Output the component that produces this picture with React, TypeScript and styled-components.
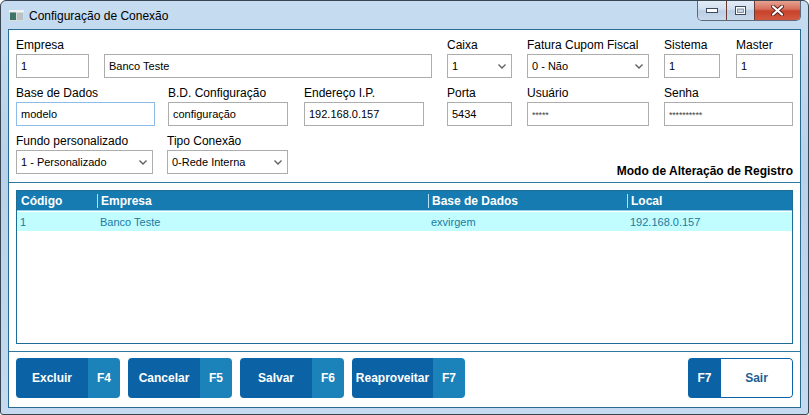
import React from "react";
import styled, { createGlobalStyle } from "styled-components";

const GlobalStyle = createGlobalStyle`
  html, body {
    margin: 0;
    padding: 0;
    background: #ffffff;
  }
  body {
    font-family: "Liberation Sans", Arial, sans-serif;
  }
`;

const Window = styled.div`
  width: 809px;
  height: 415px;
  box-sizing: border-box;
  border: 1px solid #3a4552;
  border-radius: 6px 6px 3px 3px;
  background: linear-gradient(180deg, #c6dcf1 0%, #b9d1ea 40%, #c5daef 100%);
  padding: 0 7px 6px;
  display: flex;
  flex-direction: column;
  overflow: hidden;
`;

const TitleBar = styled.div`
  height: 28px;
  display: flex;
  align-items: flex-start;
  flex-shrink: 0;
`;

const AppIcon = styled.svg`
  margin: 9px 0 0 1px;
  flex-shrink: 0;
`;

const Title = styled.div`
  margin: 7px 0 0 5px;
  font-size: 12px;
  line-height: 16px;
  color: #000;
`;

const Controls = styled.div`
  margin-left: auto;
  margin-top: -1px;
  display: flex;
  height: 20px;
  border: 1px solid #5d6b7c;
  border-top: none;
  border-radius: 0 0 5px 5px;
  overflow: hidden;
`;

const CaptionButton = styled.div<{ $w: number; $close?: boolean }>`
  width: ${(p) => p.$w}px;
  display: flex;
  align-items: center;
  justify-content: center;
  & + & {
    border-left: 1px solid ${(p) => (p.$close ? "#6b3a33" : "#7b8ba0")};
  }
  background: ${(p) =>
    p.$close
      ? "linear-gradient(180deg, #e9a899 0%, #d7705c 45%, #c7422b 55%, #d2583f 100%)"
      : "linear-gradient(180deg, #e4edf7 0%, #d3e0ef 45%, #bccee4 55%, #c9d9ec 100%)"};
`;

const Client = styled.div`
  flex: 1;
  border: 1px solid #2a6b92;
  background: #ffffff;
  display: flex;
  flex-direction: column;
  min-height: 0;
`;

const FormSection = styled.div`
  height: 153px;
  box-sizing: border-box;
  padding: 7px 7px 0;
  border-bottom: 1px solid #2f78a2;
  display: flex;
  flex-direction: column;
  gap: 7px;
`;

const Row = styled.div`
  display: flex;
  align-items: flex-start;
`;

const Field = styled.div<{ $w: number; $ml?: number }>`
  width: ${(p) => p.$w}px;
  margin-left: ${(p) => p.$ml ?? 0}px;
  display: flex;
  flex-direction: column;
  flex-shrink: 0;
`;

const Label = styled.div`
  font-size: 12px;
  line-height: 17px;
  color: #000;
  white-space: nowrap;
`;

const Box = styled.div<{ $focused?: boolean }>`
  height: 24px;
  box-sizing: border-box;
  border: 1px solid ${(p) => (p.$focused ? "#8fbce6" : "#adadad")};
  background: #ffffff;
  padding: 0 5px 0 4px;
  display: flex;
  align-items: center;
  font-size: 11px;
  color: #000;
  white-space: nowrap;
`;

const Mask = styled.span`
  font-size: 9px;
  letter-spacing: -0.2px;
  color: #444;
  margin-top: 1px;
`;

const SelectText = styled.span`
  flex: 1;
`;

const Note = styled.div`
  margin-left: auto;
  align-self: flex-end;
  margin-bottom: -4px;
  font-size: 12px;
  line-height: 13px;
  font-weight: bold;
  color: #000;
`;

const GridSection = styled.div`
  height: 169px;
  box-sizing: border-box;
  padding: 7px;
  border-bottom: 1px solid #2f78a2;
`;

const GridBox = styled.div`
  height: 154px;
  box-sizing: border-box;
  border: 1px solid #1c6c95;
  background: #ffffff;
`;

const GridRow = styled.div<{ $head?: boolean }>`
  display: grid;
  grid-template-columns: 80px 331px 199px 1fr;
  height: 19px;
  background: ${(p) => (p.$head ? "#167bb0" : "#c1fcfe")};
  color: ${(p) => (p.$head ? "#ffffff" : "#1b7aa2")};
  font-size: ${(p) => (p.$head ? 12 : 11)}px;
  font-weight: ${(p) => (p.$head ? "bold" : "normal")};
  border-bottom: ${(p) => (p.$head ? "1px solid #8fcde4" : "none")};
  margin-bottom: ${(p) => (p.$head ? 1 : 0)}px;
`;

const Cell = styled.div<{ $sep?: boolean; $head?: boolean }>`
  position: relative;
  display: flex;
  align-items: center;
  padding-left: ${(p) => (p.$head ? 4 : 3)}px;
  white-space: nowrap;
  ${(p) =>
    p.$sep && p.$head
      ? `&::before {
    content: "";
    position: absolute;
    left: 0;
    top: 3px;
    bottom: 2px;
    width: 1px;
    background: #b9dff1;
  }`
      : ""}
`;

const ButtonBar = styled.div`
  flex: 1;
  padding: 6px 7px 0;
  display: flex;
  align-items: flex-start;
  gap: 8px;
`;

const ActionButton = styled.div`
  height: 40px;
  display: flex;
  border-radius: 4px;
  overflow: hidden;
  color: #ffffff;
  font-size: 12px;
  font-weight: bold;
`;

const ButtonLabel = styled.div<{ $w: number; $light?: boolean }>`
  width: ${(p) => p.$w}px;
  box-sizing: border-box;
  display: flex;
  align-items: center;
  justify-content: center;
  background: ${(p) => (p.$light ? "#ffffff" : "#0b63a6")};
  color: ${(p) => (p.$light ? "#1a5e93" : "#ffffff")};
  border: ${(p) => (p.$light ? "1px solid #0b63a6" : "none")};
  border-left: none;
  border-radius: ${(p) => (p.$light ? "0 4px 4px 0" : "0")};
`;

const KeyPart = styled.div<{ $w: number; $dark?: boolean }>`
  width: ${(p) => p.$w}px;
  display: flex;
  align-items: center;
  justify-content: center;
  background: ${(p) => (p.$dark ? "#0b63a6" : "#1b82ba")};
  color: #ffffff;
`;

const ExitButton = styled(ActionButton)`
  margin-left: auto;
`;

const Chevron = () => (
  <svg width="8" height="5" viewBox="0 0 8 5">
    <polyline points="0.5,0.5 4,4 7.5,0.5" fill="none" stroke="#606060" strokeWidth="1.4" />
  </svg>
);

interface SelectProps {
  value: string;
}

const Select: React.FC<SelectProps> = ({ value }) => (
  <Box>
    <SelectText>{value}</SelectText>
    <Chevron />
  </Box>
);

interface ActionProps {
  label: string;
  fkey: string;
  w: number;
}

const Action: React.FC<ActionProps> = ({ label, fkey, w }) => (
  <ActionButton>
    <ButtonLabel $w={w}>{label}</ButtonLabel>
    <KeyPart $w={32}>{fkey}</KeyPart>
  </ActionButton>
);

const columns = ["Código", "Empresa", "Base de Dados", "Local"];
const rows = [["1", "Banco Teste", "exvirgem", "192.168.0.157"]];

export default function App() {
  return (
    <>
      <GlobalStyle />
      <Window>
        <TitleBar>
          <AppIcon width="15" height="11" viewBox="0 0 15 11">
            <rect x="0" y="0" width="15" height="11" fill="#d8dcdc" />
            <rect x="0" y="0" width="15" height="2" fill="#eef2f2" />
            <rect x="1" y="2.5" width="6" height="7.5" fill="#3e7468" />
            <rect x="8" y="3" width="6" height="7" fill="#b9c1c2" />
          </AppIcon>
          <Title>Configuração de Conexão</Title>
          <Controls>
            <CaptionButton $w={28}>
              <svg width="12" height="5" viewBox="0 0 12 5">
                <rect x="0.5" y="0.5" width="11" height="4" fill="#ffffff" stroke="#3b4a5c" />
              </svg>
            </CaptionButton>
            <CaptionButton $w={27}>
              <svg width="11" height="9" viewBox="0 0 11 9">
                <rect x="0.5" y="0.5" width="10" height="8" fill="#ffffff" stroke="#3b4a5c" />
                <rect x="2.5" y="3" width="6" height="3.5" fill="#c9d6e6" stroke="#6b7d93" strokeWidth="0.8" />
              </svg>
            </CaptionButton>
            <CaptionButton $w={45} $close>
              <svg width="13" height="11" viewBox="0 0 13 11">
                <path d="M2 1.5 L11 9.5 M11 1.5 L2 9.5" stroke="#5a2219" strokeWidth="4" strokeLinecap="round" />
                <path d="M2 1.5 L11 9.5 M11 1.5 L2 9.5" stroke="#ffffff" strokeWidth="2.2" strokeLinecap="round" />
              </svg>
            </CaptionButton>
          </Controls>
        </TitleBar>
        <Client>
          <FormSection>
            <Row>
              <Field $w={73}>
                <Label>Empresa</Label>
                <Box>1</Box>
              </Field>
              <Field $w={328} $ml={15}>
                <Label>&nbsp;</Label>
                <Box>Banco Teste</Box>
              </Field>
              <Field $w={65} $ml={15}>
                <Label>Caixa</Label>
                <Select value="1" />
              </Field>
              <Field $w={122} $ml={15}>
                <Label>Fatura Cupom Fiscal</Label>
                <Select value="0 - Não" />
              </Field>
              <Field $w={56} $ml={15}>
                <Label>Sistema</Label>
                <Box>1</Box>
              </Field>
              <Field $w={57} $ml={16}>
                <Label>Master</Label>
                <Box>1</Box>
              </Field>
            </Row>
            <Row>
              <Field $w={139}>
                <Label>Base de Dados</Label>
                <Box $focused>modelo</Box>
              </Field>
              <Field $w={120} $ml={13}>
                <Label>B.D. Configuração</Label>
                <Box>configuração</Box>
              </Field>
              <Field $w={120} $ml={16}>
                <Label>Endereço I.P.</Label>
                <Box>192.168.0.157</Box>
              </Field>
              <Field $w={65} $ml={23}>
                <Label>Porta</Label>
                <Box>5434</Box>
              </Field>
              <Field $w={122} $ml={15}>
                <Label>Usuário</Label>
                <Box>
                  <Mask>*****</Mask>
                </Box>
              </Field>
              <Field $w={129} $ml={15}>
                <Label>Senha</Label>
                <Box>
                  <Mask>**********</Mask>
                </Box>
              </Field>
            </Row>
            <Row>
              <Field $w={137}>
                <Label>Fundo personalizado</Label>
                <Select value="1 - Personalizado" />
              </Field>
              <Field $w={121} $ml={14}>
                <Label>Tipo Conexão</Label>
                <Select value="0-Rede Interna" />
              </Field>
              <Note>Modo de Alteração de Registro</Note>
            </Row>
          </FormSection>
          <GridSection>
            <GridBox>
              <GridRow $head>
                {columns.map((c, i) => (
                  <Cell key={c} $head $sep={i > 0}>
                    {c}
                  </Cell>
                ))}
              </GridRow>
              {rows.map((r, idx) => (
                <GridRow key={idx}>
                  {r.map((v, i) => (
                    <Cell key={i}>{v}</Cell>
                  ))}
                </GridRow>
              ))}
            </GridBox>
          </GridSection>
          <ButtonBar>
            <Action label="Excluir" fkey="F4" w={72} />
            <Action label="Cancelar" fkey="F5" w={72} />
            <Action label="Salvar" fkey="F6" w={72} />
            <Action label="Reaproveitar" fkey="F7" w={81} />
            <ExitButton>
              <KeyPart $w={33} $dark>
                F7
              </KeyPart>
              <ButtonLabel $w={72} $light>
                Sair
              </ButtonLabel>
            </ExitButton>
          </ButtonBar>
        </Client>
      </Window>
    </>
  );
}
